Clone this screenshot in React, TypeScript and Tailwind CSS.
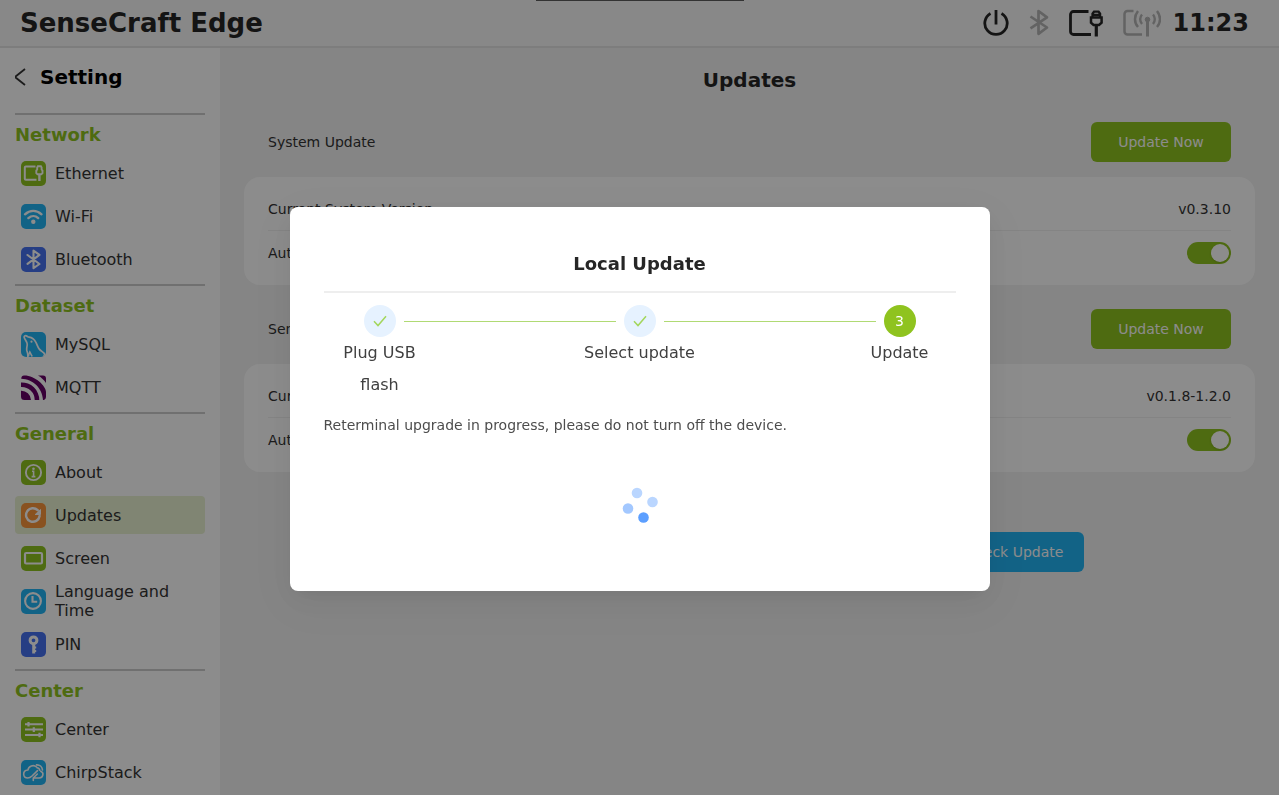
import React from "react";

type IconProps = { className?: string };

const EthernetIcon = () => (
  <svg viewBox="0 0 25 25" className="w-[25px] h-[25px]" fill="none">
    <rect width="25" height="25" rx="5" fill="#8fc31f" />
    <path
      d="M14.500 5.500H4.800a1 1 0 0 0-1 1v11.300a1 1 0 0 0 1 1H15.500"
      stroke="#fff"
      strokeWidth="2"
    />
    <path
      d="M16.200 6.500l.7-1.300h3l.7 1.300v2l.9 1v2.600l-1.200 1.200h-3.800l-1.200-1.200V9.500l.9-1z"
      stroke="#fff"
      strokeWidth="1.900"
    />
    <path d="M18.400 13v7" stroke="#fff" strokeWidth="2.400" />
  </svg>
);

const WifiIcon = () => (
  <svg viewBox="0 0 25 25" className="w-[25px] h-[25px]" fill="none">
    <rect width="25" height="25" rx="5" fill="#22b4f5" />
    <g stroke="#fff" strokeWidth="2.400" strokeLinecap="round">
      <path d="M4 10.300C9 5.700 15.500 5.700 20.500 10.300" />
      <path d="M7.400 14.100c3-2.700 7-2.700 9.800 0" />
    </g>
    <circle cx="12.300" cy="17.800" r="2.200" fill="#fff" />
  </svg>
);

const BluetoothIcon = () => (
  <svg viewBox="0 0 25 25" className="w-[25px] h-[25px]" fill="none">
    <rect width="25" height="25" rx="5" fill="#4671f0" />
    <path
      d="M6.500 8l12 9-6 4.200V3.600l6 4.200-12 9"
      stroke="#fff"
      strokeWidth="2.100"
      strokeLinejoin="round"
      strokeLinecap="round"
    />
  </svg>
);

const MySqlIcon = () => (
  <svg viewBox="0 0 25 25" className="w-[25px] h-[25px]" fill="none">
    <rect width="25" height="25" rx="5" fill="#22b4f5" />
    <path
      d="M6.800 24.500c.3-3-.6-4.300-1-6-.5-2.500.6-4.500.4-6.500-.2-2.300-2.600-4.800-3-6.600-.3-1.400.9-2 2.200-1.500 1 .4 1.600 1.100 2.700 1.200 3 .4 5.300 2.300 6.800 5.200 1.200 2.300 1.800 4.800 3.400 6.800 1.300 1.700 3.300 2.700 5 4.300"
      stroke="#fff"
      strokeWidth="1.700"
      strokeLinecap="round"
      strokeLinejoin="round"
    />
    <path
      d="M7.500 24.500c.2-1.800.3-3 1.300-4.700.9 1.500 1.200 3.300 2.500 4.700"
      stroke="#fff"
      strokeWidth="1.500"
    />
    <path d="M22.500 20.800l2 1v1.500l-3 1.500c1-1.500 1.800-2.500 1-4z" fill="#fff" />
    <circle cx="10.500" cy="9.700" r="1.100" fill="#fff" />
  </svg>
);

const MqttIcon = () => (
  <svg viewBox="0 0 25 25" className="w-[25px] h-[25px]">
    <path d="M0 15.800A9.700 9.700 0 0 1 10 25H3.500A3.500 3.500 0 0 1 0 21.500z" fill="#660066" />
    <path d="M0 7.500A17.600 17.600 0 0 1 18.300 25H13.700A13 13 0 0 0 0 12z" fill="#660066" />
    <path d="M3 .5C14 .3 25 11 25 17v5q0 2-2 3H22C21.500 13.500 12 4 .2 3.800Q.5.500 3 .5z" fill="#660066" />
    <path d="M17 .5h5Q25 .5 25 3.500V8C23 5 20.500 2.500 17 .5z" fill="#660066" />
  </svg>
);

const AboutIcon = () => (
  <svg viewBox="0 0 25 25" className="w-[25px] h-[25px]" fill="none">
    <rect width="25" height="25" rx="5" fill="#8fc31f" />
    <circle cx="12.500" cy="12.500" r="7.600" stroke="#fff" strokeWidth="1.900" />
    <circle cx="12.500" cy="8.700" r="1.300" fill="#fff" />
    <path d="M11 11.300h1.600v5.200M10.600 16.600h3.800" stroke="#fff" strokeWidth="1.600" />
  </svg>
);

const UpdatesIcon = () => (
  <svg viewBox="0 0 25 25" className="w-[25px] h-[25px]" fill="none">
    <rect width="25" height="25" rx="5" fill="#f9963b" />
    <path
      d="M16.700 7.200A6.800 6.800 0 1 0 18.600 13"
      stroke="#fff"
      strokeWidth="2.400"
      strokeLinecap="round"
    />
    <path d="M19.500 6.500v5h-5.300z" fill="#fff" stroke="#fff" strokeLinejoin="round" />
  </svg>
);

const ScreenIcon = () => (
  <svg viewBox="0 0 25 25" className="w-[25px] h-[25px]" fill="none">
    <rect width="25" height="25" rx="5" fill="#8fc31f" />
    <rect x="4" y="7" width="17" height="10.500" rx="1.200" stroke="#fff" strokeWidth="2.200" />
  </svg>
);

const ClockIcon = () => (
  <svg viewBox="0 0 25 25" className="w-[25px] h-[25px]" fill="none">
    <rect width="25" height="25" rx="5" fill="#22b4f5" />
    <circle cx="12" cy="12" r="7.900" stroke="#fff" strokeWidth="2.100" />
    <path d="M11.500 7v5.700h4.700" stroke="#fff" strokeWidth="2.100" />
  </svg>
);

const PinIcon = () => (
  <svg viewBox="0 0 25 25" className="w-[25px] h-[25px]" fill="none">
    <rect width="25" height="25" rx="5" fill="#4671f0" />
    <circle cx="12.500" cy="8.300" r="3.400" stroke="#fff" strokeWidth="3" />
    <path d="M12.700 11.500v10" stroke="#fff" strokeWidth="3" />
    <path d="M12 15.500h3.200M12 19h3.200" stroke="#fff" strokeWidth="1.800" />
  </svg>
);

const CenterIcon = () => (
  <svg viewBox="0 0 25 25" className="w-[25px] h-[25px]" fill="none">
    <rect width="25" height="25" rx="5" fill="#8fc31f" />
    <path d="M4 7.200h18M4 12.600h18M4 18h18" stroke="#fff" strokeWidth="2" />
    <path d="M7.500 5v4.500M12.800 10.200v4.800M18.500 15.700v4.600" stroke="#fff" strokeWidth="2.200" />
  </svg>
);

const ChirpStackIcon = () => (
  <svg viewBox="0 0 25 25" className="w-[25px] h-[25px]" fill="none">
    <rect width="25" height="25" rx="5" fill="#22b4f5" />
    <g stroke="#fff" strokeWidth="1.600" strokeLinecap="round" strokeLinejoin="round">
      <path d="M15.500 7C12.500 4.200 7.500 6 7 10 4 10.300 2.500 12.300 2.700 14.500c.2 2.200 1.800 3.500 4 3.500 1.700 0 3-.8 4.300-2l5.500-5.400" />
      <path d="M15.500 4.900c3.200-.2 5.700 2 6 5.100M16 7.800c1.500.1 2.500 1.100 2.800 2.500" />
      <path d="M19.800 11.300c1.800.8 2.500 2.200 2 4-.5 1.800-1.800 2.700-3.500 2.700h-6l4-4M12.300 18v2.500" />
    </g>
  </svg>
);

const PowerIcon = () => (
  <svg viewBox="0 0 26 28" className="w-[26px] h-7" fill="none">
    <path d="M13 1v14.500" stroke="currentColor" strokeWidth="2.800" />
    <path d="M7.500 4.500a11.200 11.200 0 1 0 11 0" stroke="currentColor" strokeWidth="2.800" />
  </svg>
);

const HeaderBluetoothIcon = () => (
  <svg viewBox="0 0 20 28" className="w-5 h-7 text-[#b4b4b4]" fill="none">
    <path
      d="M1.500 7.500l16.500 11-8.500 6.300V2l8.500 6.300-16.500 11"
      stroke="currentColor"
      strokeWidth="2.700"
      strokeLinejoin="round"
    />
  </svg>
);

const HeaderEthernetIcon = () => (
  <svg viewBox="0 0 34 28" className="w-[34px] h-7" fill="none" stroke="currentColor">
    <path d="M19.500 2.500H4.500a3 3 0 0 0-3 3v17a3 3 0 0 0 3 3H22" strokeWidth="2.800" />
    <path d="M23.500 8.500V4.700l1.500-2h4.600l1.500 2v3.800M24 6h7" strokeWidth="2.300" />
    <path d="M22 8.500h10.600v5.200l-2.600 2.300h-5.400L22 13.700z" strokeWidth="2.500" />
    <path d="M27.300 15.500v12" strokeWidth="3.200" />
  </svg>
);

const LoraIcon = () => (
  <svg viewBox="0 0 38 28" className="w-[38px] h-7 text-[#b4b4b4]" fill="none" stroke="currentColor">
    <path d="M10.500 2H4.500a3 3 0 0 0-3 3v17.500a3 3 0 0 0 3 3H19" strokeWidth="2.500" />
    <path d="M24.500 12v15.500" strokeWidth="3" />
    <circle cx="24.500" cy="10.500" r="2.300" fill="currentColor" />
    <path d="M19 5.500c-2.200 2.800-2.200 6.700 0 9.500M30 5.500c2.200 2.800 2.200 6.700 0 9.500" strokeWidth="2.300" />
    <path d="M15 2c-4 5-4 11.500 0 16M34 2c4 5 4 11.500 0 16" strokeWidth="2.500" />
  </svg>
);

const CheckIcon = ({ className }: IconProps) => (
  <svg viewBox="0 0 16 16" className={className} fill="none">
    <path d="M2 8.300l4 4.300L14 3.200" stroke="#a3d65c" strokeWidth="1.500" />
  </svg>
);

const menu = [
  {
    title: "Network",
    items: [
      { name: "Ethernet", icon: <EthernetIcon /> },
      { name: "Wi-Fi", icon: <WifiIcon /> },
      { name: "Bluetooth", icon: <BluetoothIcon /> },
    ],
  },
  {
    title: "Dataset",
    items: [
      { name: "MySQL", icon: <MySqlIcon /> },
      { name: "MQTT", icon: <MqttIcon /> },
    ],
  },
  {
    title: "General",
    items: [
      { name: "About", icon: <AboutIcon /> },
      { name: "Updates", icon: <UpdatesIcon />, active: true },
      { name: "Screen", icon: <ScreenIcon /> },
      { name: "Language and Time", icon: <ClockIcon /> },
      { name: "PIN", icon: <PinIcon /> },
    ],
  },
  {
    title: "Center",
    items: [
      { name: "Center", icon: <CenterIcon /> },
      { name: "ChirpStack", icon: <ChirpStackIcon /> },
    ],
  },
];

const Header = () => (
  <header className="h-12 shrink-0 flex items-center justify-between bg-[#f8f8f8] border-b-2 border-[#e4e4e4] pl-5 pr-[30px] text-[#262626]">
    <h1 className="text-[26px] leading-8 font-bold">SenseCraft Edge</h1>
    <div className="flex items-center gap-5">
      <button aria-label="Power">
        <PowerIcon />
      </button>
      <HeaderBluetoothIcon />
      <HeaderEthernetIcon />
      <LoraIcon />
      <span className="text-2xl font-bold -ml-2">11:23</span>
    </div>
  </header>
);

const Sidebar = () => (
  <aside className="w-[220px] shrink-0 bg-white px-[15px] overflow-hidden">
    <a href="#" className="flex items-center gap-3 h-[65px] text-xl font-bold text-black pb-2">
      <svg viewBox="0 0 13 20" className="w-[13px] h-5" fill="none">
        <path d="M10 2L0 10l10 8" stroke="#333" strokeWidth="1.800" />
      </svg>
      Setting
    </a>
    {menu.map((group) => (
      <section key={group.title} className="border-t-2 border-[#cdcdcd] pb-px">
        <h2 className="text-lg leading-[39px] font-bold text-[#8fc31f]">{group.title}</h2>
        {group.items.map((item) => (
          <a
            key={item.name}
            href="#"
            className={`flex items-center gap-[9px] h-[38px] mb-[5px] pl-[6px] pr-2 rounded ${
              item.active ? "bg-[#e9f3d2]" : ""
            }`}
          >
            <span className="shrink-0">{item.icon}</span>
            <span className="text-base leading-[19px] text-[#333]">{item.name}</span>
          </a>
        ))}
      </section>
    ))}
  </aside>
);

const Switch = ({ label }: { label: string }) => (
  <button
    role="switch"
    aria-checked="true"
    aria-label={label}
    className="w-11 h-[22px] rounded-full bg-[#8fc31f] flex items-center justify-end px-[2px]"
  >
    <span className="w-[18px] h-[18px] rounded-full bg-white shadow" />
  </button>
);

type UpdateBlockProps = { title: string; versionLabel: string; version: string };

const UpdateBlock = ({ title, versionLabel, version }: UpdateBlockProps) => (
  <section className="mb-6">
    <div className="flex items-center justify-between px-6 mb-[15px]">
      <h3>{title}</h3>
      <button className="w-[140px] h-10 rounded-md bg-[#8fc31f] text-white">Update Now</button>
    </div>
    <div className="bg-white rounded-2xl px-6 py-[10px]">
      <div className="flex items-center justify-between h-11 border-b border-[#f0f0f0]">
        <span>{versionLabel}</span>
        <span>{version}</span>
      </div>
      <div className="flex items-center justify-between h-11">
        <span>Auto Update</span>
        <Switch label={title} />
      </div>
    </div>
  </section>
);

const UpdatesPage = () => (
  <main className="flex-1 bg-[#f2f2f2] text-sm text-[#333]">
    <h2 className="text-xl leading-8 font-bold text-center text-[#262626] pt-4 pb-[26px]">
      Updates
    </h2>
    <div className="px-6">
      <UpdateBlock title="System Update" versionLabel="Current System Version" version="v0.3.10" />
      <UpdateBlock title="SenseCraft Edge" versionLabel="Current App Version" version="v0.1.8-1.2.0" />
    </div>
    <div className="flex justify-around pt-9">
      <button className="w-[140px] h-10 rounded-md bg-[#22b4f5] text-white">Local Update</button>
      <button className="w-[140px] h-10 rounded-md bg-[#22b4f5] text-white">Check Update</button>
    </div>
  </main>
);

const LocalUpdateModal = () => (
  <div className="fixed inset-0 bg-black/45 flex items-center justify-center pt-[3px]">
    <div
      role="dialog"
      aria-labelledby="modal-title"
      className="w-[700px] bg-white rounded-lg px-[34px] pt-[41px] pb-[68px] shadow-[0_6px_16px_-8px_rgba(0,0,0,0.08),0_9px_28px_0_rgba(0,0,0,0.05),0_12px_48px_16px_rgba(0,0,0,0.03)]"
    >
      <h2
        id="modal-title"
        className="text-lg leading-8 font-bold text-center text-[#262626] pb-[11px] border-b-2 border-[#eee]"
      >
        Local Update
      </h2>
      <div className="flex items-center gap-2 px-10 mt-3">
        <span className="w-8 h-8 rounded-full bg-[#e6f2ff] flex items-center justify-center">
          <CheckIcon className="w-4 h-4" />
        </span>
        <span className="flex-1 h-px bg-[#b0da74]" />
        <span className="w-8 h-8 rounded-full bg-[#e6f2ff] flex items-center justify-center">
          <CheckIcon className="w-4 h-4" />
        </span>
        <span className="flex-1 h-px bg-[#b0da74]" />
        <span className="w-8 h-8 rounded-full bg-[#8fc31f] text-white text-sm flex items-center justify-center">
          3
        </span>
      </div>
      <div className="flex justify-between text-base leading-8 text-center text-[#404040]">
        <span className="w-28">Plug USB flash</span>
        <span className="w-28">Select update</span>
        <span className="w-28">Update</span>
      </div>
      <p className="mt-3 text-sm leading-6 text-[#4d4d4d]">
        Reterminal upgrade in progress, please do not turn off the device.
      </p>
      <svg viewBox="0 0 36 36" className="w-9 h-9 mx-auto mt-[50px]">
        <circle cx="15" cy="6" r="5.300" fill="#bad6ff" />
        <circle cx="30.500" cy="15" r="5.300" fill="#bad6ff" />
        <circle cx="6" cy="21.500" r="5.300" fill="#a3c8ff" />
        <circle cx="21.500" cy="30.500" r="5.300" fill="#5c9fff" />
      </svg>
    </div>
  </div>
);

const App = () => {
  return (
    <div className="h-screen flex flex-col overflow-hidden font-['DejaVu_Sans',sans-serif]">
      <Header />
      <div className="flex flex-1 min-h-0">
        <Sidebar />
        <UpdatesPage />
      </div>
      <LocalUpdateModal />
      <div className="absolute top-0 left-1/2 -translate-x-1/2 w-52 h-px bg-[#333]" />
    </div>
  );
};

export default App;
